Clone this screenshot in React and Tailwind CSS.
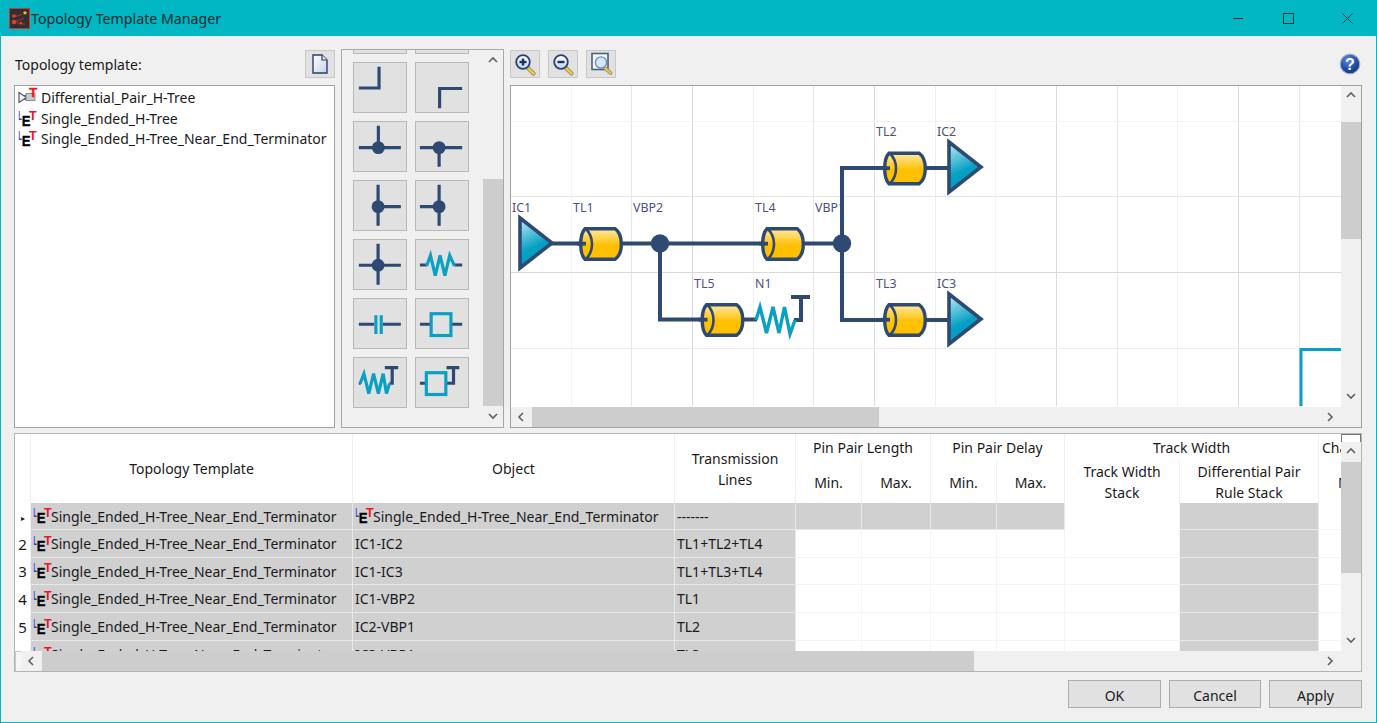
import React from "react";

const NAVY = "#2e4a72";
const TEAL = "#0aa0c4";

function Chevron({ dir }) {
  const d = { up: "M1 6 L5 2 L9 6", down: "M1 2 L5 6 L9 2", left: "M6 1 L2 5 L6 9", right: "M2 1 L6 5 L2 9" }[dir];
  return (
    <svg width="10" height="10" viewBox="0 0 10 10" fill="none" stroke="#606060" strokeWidth="1.6">
      <path d={d} />
    </svg>
  );
}

function VScroll({ arrow = 20, before, thumb, className = "" }) {
  return (
    <div className={`w-[20px] shrink-0 flex flex-col bg-[#f0f0f0] ${className}`}>
      <div className="flex items-center justify-center shrink-0" style={{ height: arrow }}><Chevron dir="up" /></div>
      <div className="flex-1 min-h-0">
        <div style={{ height: before }} />
        <div className="bg-[#cdcdcd]" style={{ height: thumb }} />
      </div>
      <div className="flex items-center justify-center shrink-0" style={{ height: arrow }}><Chevron dir="down" /></div>
    </div>
  );
}

function HScroll({ before, thumb }) {
  return (
    <div className="h-[20px] flex-1 min-w-0 flex bg-[#f0f0f0]">
      <div className="w-[21px] flex items-center justify-center shrink-0"><Chevron dir="left" /></div>
      <div className="flex-1 min-w-0 flex">
        <div style={{ width: before }} />
        <div className="bg-[#cdcdcd]" style={{ width: thumb }} />
      </div>
      <div className="w-[21px] flex items-center justify-center shrink-0"><Chevron dir="right" /></div>
    </div>
  );
}

function EtIcon() {
  return (
    <svg width="18" height="18" viewBox="0 0 18 18" className="shrink-0 overflow-visible font-['Liberation_Sans',sans-serif]">
      <text transform="translate(.5 9.5) scale(.42 1)" fontSize="12.5" fontWeight="700" fill="#2a35e0">L</text>
      <text transform="translate(3.8 16) scale(.85 1)" fontSize="15.5" fontWeight="700" fill="#000" stroke="#000" strokeWidth=".35">E</text>
      <text x="11" y="9.5" fontSize="12.5" fontWeight="700" fill="#f0141e">T</text>
    </svg>
  );
}

function DiffIcon() {
  return (
    <svg width="20" height="18" viewBox="0 0 20 18" className="shrink-0 overflow-visible font-['Liberation_Sans',sans-serif]">
      <path d="M1 3.5 L8.5 8.5 L1 13.5 Z" fill="#f4f4f4" stroke="#555" strokeWidth="1.2" />
      <path d="M5 6.5 H17 M5 10.5 H17" stroke="#3a55c0" strokeWidth="1.1" />
      <rect x="8" y="4.5" width="9" height="7" fill="#c6cad4" stroke="#777" strokeWidth=".8" />
      <text x="11" y="7.5" fontSize="13.5" fontWeight="700" fill="#f0141e" stroke="#f0141e" strokeWidth=".3">T</text>
    </svg>
  );
}

function AppIcon() {
  return (
    <svg width="21" height="21" viewBox="0 0 21 21" className="shrink-0">
      <rect x=".5" y=".5" width="20" height="20" fill="#322e33" stroke="#c5392c" />
      <path d="M5 8 H9 L13 6 M5 13 H9 L15 10 M6 14 L11 16 H16" stroke="#b8352c" strokeWidth="1" fill="none" />
      <circle cx="5" cy="8" r="1.8" fill="#e0402e" />
      <circle cx="5" cy="14" r="2.2" fill="#e0402e" />
      <circle cx="12" cy="15" r="1.3" fill="#e0402e" />
      <path d="M16 2.5 L16.7 4 L18.3 4.2 L17.1 5.2 L17.5 6.8 L16 6 L14.5 6.8 L14.9 5.2 L13.7 4.2 L15.3 4 Z" fill="#f5c518" />
    </svg>
  );
}

function ToolBtn({ children, className = "" }) {
  return (
    <button className={`w-[30px] h-[28px] shrink-0 bg-[#e1e1e1] border border-[#c8c8c8] flex items-center justify-center p-0 ${className}`}>
      {children}
    </button>
  );
}

function Mag({ sign }) {
  return (
    <svg width="26" height="26" viewBox="0 0 26 26">
      <defs>
        <linearGradient id="lens" x1="0" y1="0" x2="0" y2="1">
          <stop offset="0" stopColor="#ffffff" />
          <stop offset="1" stopColor="#bcd6f2" />
        </linearGradient>
      </defs>
      <path d="M15.5 16.5 L21.5 22.5" stroke="#8a8a70" strokeWidth="4.2" strokeLinecap="round" />
      <path d="M15.5 16.5 L21.5 22.5" stroke="#f4c542" strokeWidth="2.6" strokeLinecap="round" />
      <circle cx="11" cy="11" r="6.8" fill="url(#lens)" stroke="#2b3f75" strokeWidth="1.8" />
      <path d="M7.5 11 H14.5" stroke="#1f2f66" strokeWidth="2.4" />
      {sign === "+" && <path d="M11 7.5 V14.5" stroke="#1f2f66" strokeWidth="2.4" />}
    </svg>
  );
}

function FitIcon() {
  return (
    <svg width="26" height="26" viewBox="0 0 26 26">
      <rect x="4" y="2.5" width="16" height="16" fill="#f6f8fc" stroke="#4a6086" strokeWidth="1.6" />
      <path d="M17 17 L22.5 22" stroke="#8a8a70" strokeWidth="3.6" strokeLinecap="round" />
      <path d="M17 17 L22.5 22" stroke="#f4c542" strokeWidth="2" strokeLinecap="round" />
      <circle cx="13" cy="11.5" r="5.6" fill="#d6e6f8" stroke="#6d8fb8" strokeWidth="1.4" />
    </svg>
  );
}

function DocIcon() {
  return (
    <svg width="18" height="20" viewBox="0 0 18 20">
      <defs>
        <linearGradient id="doc" x1="0" y1="0" x2="1" y2="1">
          <stop offset="0" stopColor="#ffffff" />
          <stop offset="1" stopColor="#c7cfe6" />
        </linearGradient>
      </defs>
      <path d="M2 1 H11 L16 6 V19 H2 Z" fill="url(#doc)" stroke="#2b3f6a" strokeWidth="1.4" />
      <path d="M11 1 V6 H16" fill="#e8ebf4" stroke="#2b3f6a" strokeWidth="1.2" />
    </svg>
  );
}

function HelpIcon() {
  return (
    <svg width="22" height="22" viewBox="0 0 22 22" className="font-['Liberation_Sans',sans-serif]">
      <defs>
        <radialGradient id="hb" cx=".4" cy=".3" r=".8">
          <stop offset="0" stopColor="#5a8de0" />
          <stop offset=".6" stopColor="#1e4aa8" />
          <stop offset="1" stopColor="#12306f" />
        </radialGradient>
      </defs>
      <circle cx="11" cy="11" r="9.8" fill="url(#hb)" stroke="#a9afb9" strokeWidth="1.2" />
      <text x="11" y="16.5" fontSize="16" fontWeight="700" fill="#fff" textAnchor="middle">?</text>
    </svg>
  );
}

const W = { stroke: NAVY, strokeWidth: 3.3, fill: "none" };
const TL = { stroke: TEAL, strokeWidth: 3.3, fill: "none" };
const DOT = { fill: NAVY };

const palette = [
  null,
  null,
  <path {...W} d="M5 26 H26 V4" />,
  <path {...W} d="M24.5 47 V26.5 H48" />,
  <g><path {...W} d="M5 26.7 H48.7 M25.3 4 V26" /><circle cx="25.3" cy="26.7" r="6.7" {...DOT} /></g>,
  <g><path {...W} d="M4 26.7 H48 M24 26 V46.7" /><circle cx="24" cy="26.7" r="6.7" {...DOT} /></g>,
  <g><path {...W} d="M25 4 V46.7 M25 26.7 H48.7" /><circle cx="25" cy="26.7" r="6.7" {...DOT} /></g>,
  <g><path {...W} d="M24 4 V46.7 M4 26.7 H24" /><circle cx="24" cy="26.7" r="6.7" {...DOT} /></g>,
  <g><path {...W} d="M25 4 V46.7 M5 26.3 H48.7" /><circle cx="25" cy="26.3" r="6.7" {...DOT} /></g>,
  <g><path {...W} d="M4 26 H11 M40 26 H48" /><path {...TL} d="M11 27 L15 16 L20 37 L25 16 L30 37 L35 16 L40 27" /></g>,
  <g><path {...W} d="M5 26.3 H21 M30 26.3 H48.7" /><path {...TL} d="M22.7 17 V36.3 M28.3 17 V36.3" /></g>,
  <g><path {...W} d="M4 26.3 H15 M37 26.3 H48" /><rect x="15.7" y="15.3" width="20.6" height="22.7" {...TL} /></g>,
  <g><path {...W} d="M5 26.3 H7 M37 26.3 H39.7 V10 M32 10 H46" /><path {...TL} d="M6.3 26.5 L10.3 16.3 L15.3 37 L20.3 16.3 L25.3 37 L30.3 16.3 L33.7 37 L37 26.5" /></g>,
  <g><path {...W} d="M4 26.3 H10.7 M31 26.3 H39 V10 M31.7 10 H45" /><rect x="10.7" y="15.3" width="20.3" height="22.7" {...TL} /></g>,
];

function Cylinder({ x, y }) {
  return (
    <g>
      <path
        d={`M${x + 6} ${y + 1.7} H${x + 36} Q${x + 42.3} ${y + 6} ${x + 42.3} ${y + 17} Q${x + 42.3} ${y + 28} ${x + 36} ${y + 32.3} H${x + 6} Q${x + 1.7} ${y + 28} ${x + 1.7} ${y + 17} Q${x + 1.7} ${y + 6} ${x + 6} ${y + 1.7} Z`}
        fill="url(#gold)"
        stroke={NAVY}
        strokeWidth="3.4"
      />
      <path d={`M${x + 7} ${y + 2} Q${x + 13} ${y + 8} ${x + 13} ${y + 17} Q${x + 13} ${y + 26} ${x + 7} ${y + 32}`} fill="none" stroke={NAVY} strokeWidth="2.6" />
      <path d={`M${x - 2} ${y + 16.7} H${x + 7}`} stroke={NAVY} strokeWidth="3.8" />
    </g>
  );
}

function Tri({ x, y, h }) {
  return <path d={`M${x} ${y} L${x + 32} ${y + h / 2} L${x} ${y + h} Z`} fill="url(#cyan)" stroke={NAVY} strokeWidth="3.6" />;
}

function Diagram() {
  const vLines = [[571, "#f5f5f5"], [631, "#e6e6e6"], [692, "#d9d9d9"], [753, "#f0f0f0"], [813, "#e8e8e8"], [874, "#dadada"], [935, "#eeeeee"], [995, "#f5f5f5"], [1056, "#dadada"], [1117, "#e6e6e6"], [1177, "#f2f2f2"], [1238, "#dedede"], [1299, "#e4e4e4"]];
  const hLines = [[121, "#f3f3f3"], [196, "#e6e6e6"], [272, "#d9d9d9"], [348, "#ececec"]];
  const labels = [["IC1", 512, 212], ["TL1", 573, 212], ["VBP2", 633, 212], ["TL4", 755, 212], ["VBP1", 815, 212], ["TL2", 876, 136], ["IC2", 937, 136], ["TL5", 694, 288], ["N1", 755, 288], ["TL3", 876, 288], ["IC3", 937, 288]];
  return (
    <svg viewBox="511 86 830 320" width="830" height="320" className="block">
      <defs>
        <linearGradient id="gold" x1="0" y1="0" x2="0" y2="1">
          <stop offset="0" stopColor="#ffe9a6" />
          <stop offset=".55" stopColor="#ffc000" />
          <stop offset="1" stopColor="#ffc000" />
        </linearGradient>
        <linearGradient id="cyan" x1="0" y1="0" x2=".3" y2="1">
          <stop offset="0" stopColor="#c4eef6" />
          <stop offset=".65" stopColor="#06a0c4" />
          <stop offset="1" stopColor="#009cc0" />
        </linearGradient>
      </defs>
      {vLines.map(([x, c]) => <line key={x} x1={x + 0.5} x2={x + 0.5} y1="86" y2="406" stroke={c} />)}
      {hLines.map(([y, c]) => <line key={y} y1={y + 0.5} y2={y + 0.5} x1="511" x2="1341" stroke={c} />)}
      {labels.map(([t, x, y]) => <text key={t} x={x} y={y} fontSize="12.4" fill="#50507f">{t}</text>)}
      <g stroke={NAVY} strokeWidth="4" fill="none">
        <path d="M550 243.5 H842" />
        <path d="M660 243.5 V319.5 H720" />
        <path d="M744 319.5 H757" />
        <path d="M842 243.5 V168 H900" />
        <path d="M842 243.5 V320 H900" />
        <path d="M925 168 H950 M925 320 H950" />
        <path d="M794 320 H801 V297 M791 297 H810" />
      </g>
      <Tri x={520} y={218} h={50} />
      <Tri x={949} y={142} h={50} />
      <Tri x={949} y={294} h={50} />
      <Cylinder x={579} y={227} />
      <Cylinder x={761} y={227} />
      <Cylinder x={700.5} y={303} />
      <Cylinder x={883} y={151.5} />
      <Cylinder x={883} y={303} />
      <circle cx="660" cy="243.5" r="9.2" fill={NAVY} />
      <circle cx="842" cy="243.5" r="9.2" fill={NAVY} />
      <path d="M756 320 L760 307 L766.5 333 L773 307 L779 333 L784.5 307 L790 334 L795 320" fill="none" stroke={TEAL} strokeWidth="3.4" />
      <path d="M1341 349.5 H1301 V406" fill="none" stroke={TEAL} strokeWidth="3" />
    </svg>
  );
}

const TPL = "Single_Ended_H-Tree_Near_End_Terminator";
const rows = [
  ["▸", TPL, TPL, "-------", "h-[27px]"],
  ["2", TPL, "IC1-IC2", "TL1+TL2+TL4", "h-[28px]"],
  ["3", TPL, "IC1-IC3", "TL1+TL3+TL4", "h-[27px]"],
  ["4", TPL, "IC1-VBP2", "TL1", "h-[28px]"],
  ["5", TPL, "IC2-VBP1", "TL2", "h-[28px]"],
  ["6", TPL, "IC3-VBP1", "TL3", "h-[28px]"],
];

const th = "p-0 font-normal text-center align-middle border-r border-[#efefef] leading-[21px] bg-white overflow-hidden";
const gray = "bg-[#d0d0d0] border-r border-b border-[#e8e8e8] p-0";
const white = "bg-white border-r border-b border-[#f4f4f4] p-0";

function DataTable() {
  return (
    <table className="table-fixed w-[1364px] border-separate border-spacing-0 text-[14px] text-[#1a1a1a]">
      <colgroup>
        <col className="w-[16px]" />
        <col className="w-[322px]" />
        <col className="w-[322px]" />
        <col className="w-[121px]" />
        <col className="w-[66px]" />
        <col className="w-[69px]" />
        <col className="w-[66px]" />
        <col className="w-[68px]" />
        <col className="w-[115px]" />
        <col className="w-[139px]" />
        <col className="w-[60px]" />
      </colgroup>
      <thead>
        <tr className="h-[27px]">
          <th rowSpan={2} className={th}></th>
          <th rowSpan={2} className={th}>Topology Template</th>
          <th rowSpan={2} className={th}>Object</th>
          <th rowSpan={2} className={th}>Transmission<br />Lines</th>
          <th colSpan={2} className={th}>Pin Pair Length</th>
          <th colSpan={2} className={th}>Pin Pair Delay</th>
          <th colSpan={2} className={th}>Track Width</th>
          <th className={`${th} text-left pl-[3px] whitespace-nowrap`}>Characteristic</th>
        </tr>
        <tr className="h-[42px]">
          <th className={th}>Min.</th>
          <th className={th}>Max.</th>
          <th className={th}>Min.</th>
          <th className={th}>Max.</th>
          <th className={th}>Track Width<br />Stack</th>
          <th className={th}>Differential Pair<br />Rule Stack</th>
          <th className={`${th} text-left pl-[19px]`}>Min.</th>
        </tr>
      </thead>
      <tbody>
        {rows.map((r, i) => {
          const first = i === 0;
          const mid = first ? gray : white;
          return (
            <tr key={i} className={r[4]}>
              <td className="p-0 bg-white text-center border-r border-[#efefef] text-[15px]">
                {first ? <span className="text-[8px] align-middle">{r[0]}</span> : r[0]}
              </td>
              <td className={gray}>
                <div className="flex items-center pl-[2px] whitespace-nowrap"><EtIcon /><span>{r[1]}</span></div>
              </td>
              <td className={gray}>
                <div className="flex items-center pl-[2px] whitespace-nowrap">
                  {first && <EtIcon />}
                  <span>{r[2]}</span>
                </div>
              </td>
              <td className={`${gray} pl-[2px]`}>{r[3]}</td>
              <td className={mid}></td>
              <td className={mid}></td>
              <td className={mid}></td>
              <td className={mid}></td>
              <td className={first ? "bg-white border-r border-[#f4f4f4] p-0" : white}></td>
              <td className={gray}></td>
              <td className={white}></td>
            </tr>
          );
        })}
      </tbody>
    </table>
  );
}

export default function App() {
  return (
    <div className="w-[1377px] h-[723px] flex flex-col bg-[#f0f0f0] border-x border-b border-[#00b7c3] font-['Noto_Sans',sans-serif] text-[14px] text-[#1a1a1a] overflow-hidden">
      {/* title bar */}
      <div className="h-[36px] -mx-px shrink-0 bg-[#00b7c3] flex items-center pl-[9px] text-[14.2px] text-[#0a2a2e]">
        <AppIcon />
        <span className="ml-px pt-[2px]">Topology Template Manager</span>
        <div className="ml-auto flex items-center h-full">
          <div className="w-[42px] flex justify-center"><div className="w-[10px] h-px bg-[#10282c]" /></div>
          <div className="w-[58px] flex justify-center"><div className="w-[11px] h-[11px] border border-[#10282c]" /></div>
          <div className="w-[60px] flex justify-center">
            <svg width="11" height="11" viewBox="0 0 11 11" stroke="#10282c" strokeWidth="1"><path d="M.5 .5 L10.5 10.5 M10.5 .5 L.5 10.5" /></svg>
          </div>
        </div>
      </div>

      {/* body */}
      <div className="flex-1 min-h-0 flex flex-col pl-[13px] pr-[14px] pt-[13px]">
        <div className="h-[379px] shrink-0 flex">
          {/* left column */}
          <div className="w-[321px] shrink-0 flex flex-col pt-px">
            <div className="h-[28px] flex items-center justify-between">
              <span className="pl-px">Topology template:</span>
              <ToolBtn><DocIcon /></ToolBtn>
            </div>
            <div className="mt-[7px] flex-1 min-h-0 bg-white border border-[#a0a0a8] pt-[2px] pl-[3px] leading-[20.5px]">
              <div className="flex items-center h-[20.5px] gap-[3px]"><DiffIcon /><span>Differential_Pair_H-Tree</span></div>
              <div className="flex items-center h-[20.5px] gap-[5px]"><EtIcon /><span>Single_Ended_H-Tree</span></div>
              <div className="flex items-center h-[20.5px] gap-[5px]"><EtIcon /><span>{TPL}</span></div>
            </div>
          </div>

          {/* palette */}
          <div className="ml-[6px] w-[163px] shrink-0 flex bg-[#f0f0f0] border border-[#a8a8a8] overflow-hidden">
            <div className="flex-1 min-w-0 overflow-hidden">
              <div className="grid grid-cols-[54px_54px] gap-x-[8px] gap-y-[8px] pl-[11px] -mt-[47px]">
                {palette.map((g, i) => (
                  <div key={i} className="h-[51px] bg-[#e1e1e1] border border-[#b8b8b8]">
                    {g && <svg viewBox="0 0 54 51" width="52" height="49" className="block">{g}</svg>}
                  </div>
                ))}
              </div>
            </div>
            <VScroll arrow={21} before={108} thumb={227} />
          </div>

          {/* diagram column */}
          <div className="ml-[6px] flex-1 min-w-0 flex flex-col pt-px">
            <div className="h-[28px] flex items-center gap-[8px]">
              <ToolBtn><Mag sign="+" /></ToolBtn>
              <ToolBtn><Mag sign="-" /></ToolBtn>
              <ToolBtn><FitIcon /></ToolBtn>
              <div className="ml-auto mr-[1px]"><HelpIcon /></div>
            </div>
            <div className="mt-[7px] flex-1 min-h-0 bg-white border border-[#a0a0a8] flex flex-col">
              <div className="flex-1 min-h-0 flex">
                <div className="flex-1 min-w-0 overflow-hidden"><Diagram /></div>
                <VScroll arrow={20} before={16} thumb={117} />
              </div>
              <div className="flex bg-[#f0f0f0]">
                <HScroll before={0} thumb={347} />
                <div className="w-[20px] shrink-0" />
              </div>
            </div>
          </div>
        </div>

        {/* table */}
        <div className="mt-[5px] h-[239px] shrink-0 border border-[#b4b4b4] bg-white flex flex-col">
          <div className="flex-1 min-h-0 flex">
            <div className="flex-1 min-w-0 overflow-hidden"><DataTable /></div>
            <div className="w-[20px] shrink-0 flex flex-col">
              <div className="h-[8px] shrink-0 border-t border-x border-[#777] bg-white" />
              <VScroll arrow={20} before={0} thumb={111} className="flex-1 min-h-0" />
            </div>
          </div>
          <div className="flex bg-[#f0f0f0]">
            <div className="w-[6px] shrink-0 bg-[#f6f6f6] border-l border-t border-[#c8c8c8]" />
            <HScroll before={0} thumb={932} />
            <div className="w-[20px] shrink-0" />
          </div>
        </div>

        {/* buttons */}
        <div className="mt-[8px] flex justify-end gap-[8px]">
          <button className="w-[93px] h-[28px] pt-[3px] bg-[#e1e1e1] border border-[#adadad] text-[14px] text-[#1a1a1a] leading-none">OK</button>
          <button className="w-[92px] h-[28px] pt-[3px] bg-[#e1e1e1] border border-[#adadad] text-[14px] text-[#1a1a1a] leading-none">Cancel</button>
          <button className="w-[93px] h-[28px] pt-[3px] bg-[#e1e1e1] border border-[#adadad] text-[14px] text-[#1a1a1a] leading-none">Apply</button>
        </div>
      </div>
    </div>
  );
}
